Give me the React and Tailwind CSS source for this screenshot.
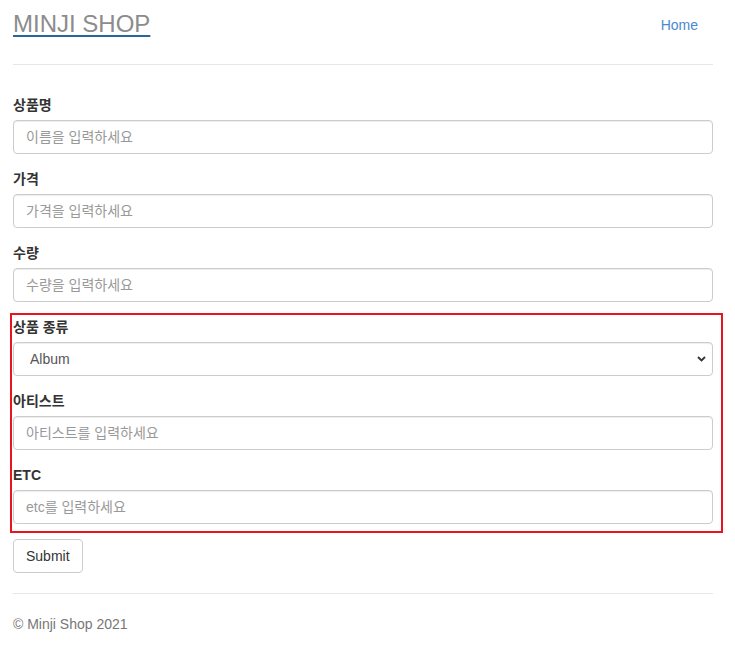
import React from "react";

const fields = [
  { label: "상품명", placeholder: "이름을 입력하세요" },
  { label: "가격", placeholder: "가격을 입력하세요" },
  { label: "수량", placeholder: "수량을 입력하세요" },
];

const extraFields = [
  { label: "아티스트", placeholder: "아티스트를 입력하세요" },
  { label: "ETC", placeholder: "etc를 입력하세요" },
];

const inputClass =
  "block w-full h-[34px] px-[12px] border border-[#ccc] rounded-[4px] bg-white text-[14px] text-[#555] placeholder:text-[#999] shadow-[inset_0_1px_1px_rgba(0,0,0,0.075)] outline-none";

const FormGroup = ({ label, children }) => (
  <div className="mb-[15px]">
    <label className="block mb-[5px] text-[14px] leading-[20px] font-bold text-[#333]">
      {label}
    </label>
    {children}
  </div>
);

const App = () => {
  return (
    <div
      className="relative min-h-[646px] bg-white text-[#333]"
      style={{ fontFamily: '"Liberation Sans", Arial, "Noto Sans CJK KR", sans-serif' }}
    >
      <div className="ml-[13px] w-[700px]">
        <div className="flex justify-between pt-[11px]">
          <a
            href="#"
            className="text-[24px] leading-[26px] text-[#8c8c8c] underline decoration-[#2b669a] decoration-2 underline-offset-[3px]"
          >
            MINJI SHOP
          </a>
          <a href="#" className="mt-[4px] mr-[15px] text-[14px] leading-[20px] text-[#4a89d0]">
            Home
          </a>
        </div>

        <hr className="mt-[27px] border-0 border-t border-[#e6e6e6]" />

        <form className="mt-[30px]">
          {fields.map((f, i) => (
            <FormGroup key={i} label={f.label}>
              <input type="text" placeholder={f.placeholder} className={inputClass} />
            </FormGroup>
          ))}

          <FormGroup label="상품 종류">
            <div className="relative">
              <select className={`${inputClass} appearance-none pl-[16px] text-[#333]`} defaultValue="Album">
                <option>Album</option>
                <option>Goods</option>
              </select>
              <svg
                className="absolute right-[7px] top-[14px] pointer-events-none"
                width="9"
                height="6"
                viewBox="0 0 9 6"
              >
                <path d="M1 1 L4.5 4.5 L8 1" fill="none" stroke="#333" strokeWidth="1.8" />
              </svg>
            </div>
          </FormGroup>

          {extraFields.map((f, i) => (
            <FormGroup key={i} label={f.label}>
              <input type="text" placeholder={f.placeholder} className={inputClass} />
            </FormGroup>
          ))}

          <button
            type="button"
            className="h-[34px] px-[12px] border border-[#ccc] rounded-[4px] bg-white text-[14px] text-[#333]"
          >
            Submit
          </button>
        </form>

        <hr className="mt-[20px] border-0 border-t border-[#e6e6e6]" />

        <footer className="mt-[20px] text-[14px] leading-[20px] text-[#777]">© Minji Shop 2021</footer>
      </div>

      <div className="absolute left-[10px] top-[313px] w-[713px] h-[220px] border-2 border-[#e8141f] pointer-events-none" />
    </div>
  );
};

export default App;
